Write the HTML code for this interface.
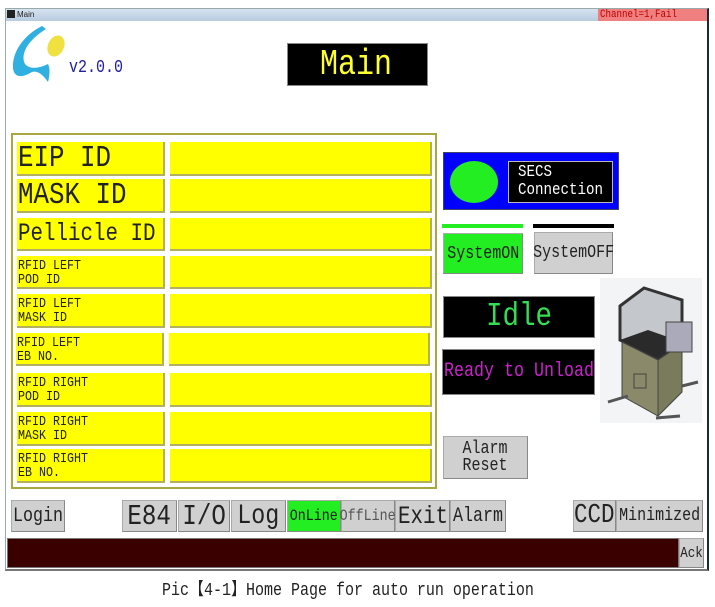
<!DOCTYPE html>
<html><head><meta charset="utf-8"><style>
*{margin:0;padding:0;box-sizing:border-box}
body{width:715px;height:607px;background:#fff;position:relative;overflow:hidden;font-family:"Liberation Mono",monospace}
.a{position:absolute}
.t{position:absolute;white-space:nowrap;transform-origin:0 0;line-height:1;transform:scaleX(.833)}
.btn{position:absolute;background:#d0d0d0;border:1px solid #aaa;border-right-color:#888;border-bottom-color:#888;color:#222;display:flex;align-items:center;justify-content:center;white-space:nowrap;overflow:visible}
.btn span{display:inline-block;transform:scaleX(.833)}
.yl{position:absolute;background:#ffff00;border-right:2px solid #b0b060;border-bottom:2px solid #b0b060}
.yl span{position:absolute;left:1px;white-space:nowrap;transform-origin:0 0;transform:scaleX(.833);color:#222;line-height:1}
</style></head><body>
<div class="a" style="left:5px;top:8px;width:704px;height:563px;border:1px solid #9aa;border-right:2px solid #1a2a3a;border-bottom:2px solid #777"></div>
<div class="a" style="left:6px;top:9px;width:701px;height:12px;background:linear-gradient(#d6e2f0,#b8cce0)"></div>
<div class="a" style="left:7px;top:10px;width:8px;height:8px;background:#222"></div>
<div class="a" style="left:17px;top:11px;font-size:8px;font-family:'Liberation Sans',sans-serif;color:#222;line-height:1">Main</div>
<div class="a" style="left:598px;top:9px;width:109px;height:12px;background:#f08080"></div>
<div class="t" style="left:600px;top:10px;font-size:11px;color:#b00">Channel=1,Fail</div>
<svg class="a" style="left:8px;top:24px" width="58" height="60" viewBox="0 0 58 60">
<path d="M34 2 C18 10 4 26 5 44 C6 54 14 54 24 48 C30 46 36 52 40 58 C42 50 42 44 40 40 C32 44 22 46 17 40 C12 30 20 16 38 5 Z" fill="#30b0e0"/>
<ellipse cx="48" cy="22" rx="8" ry="11" transform="rotate(25 48 22)" fill="#f0e040"/>
</svg>
<div class="t" style="left:69px;top:59px;font-size:18px;color:#2020a0">v2.0.0</div>
<div class="a" style="left:287px;top:43px;width:141px;height:43px;background:#000;border:1px solid #888"></div>
<div class="t" style="left:320px;top:47px;font-size:36px;color:#ffff30">Main</div>
<div class="a" style="left:11px;top:133px;width:426px;height:356px;border:2px solid #a8a840"></div>
<div class="yl" style="left:17px;top:142px;width:148px;height:34px"><span style="top:1px;font-size:31px">EIP ID</span></div>
<div class="yl" style="left:170px;top:142px;width:262px;height:34px"></div>
<div class="yl" style="left:17px;top:179px;width:148px;height:34px"><span style="top:1px;font-size:31px">MASK ID</span></div>
<div class="yl" style="left:170px;top:179px;width:262px;height:34px"></div>
<div class="yl" style="left:17px;top:218px;width:148px;height:33px"><span style="top:3px;font-size:25px">Pellicle ID</span></div>
<div class="yl" style="left:170px;top:218px;width:262px;height:33px"></div>
<div class="yl" style="left:17px;top:256px;width:148px;height:33px"><span style="top:3px;font-size:14px">RFID LEFT<br>POD ID</span></div>
<div class="yl" style="left:170px;top:256px;width:262px;height:33px"></div>
<div class="yl" style="left:17px;top:294px;width:148px;height:34px"><span style="top:3px;font-size:14px">RFID LEFT<br>MASK ID</span></div>
<div class="yl" style="left:170px;top:294px;width:262px;height:34px"></div>
<div class="yl" style="left:16px;top:333px;width:148px;height:33px"><span style="top:3px;font-size:14px">RFID LEFT<br>EB NO.</span></div>
<div class="yl" style="left:169px;top:333px;width:261px;height:33px"></div>
<div class="yl" style="left:17px;top:373px;width:148px;height:34px"><span style="top:3px;font-size:14px">RFID RIGHT<br>POD ID</span></div>
<div class="yl" style="left:170px;top:373px;width:262px;height:34px"></div>
<div class="yl" style="left:17px;top:412px;width:148px;height:34px"><span style="top:3px;font-size:14px">RFID RIGHT<br>MASK ID</span></div>
<div class="yl" style="left:170px;top:412px;width:262px;height:34px"></div>
<div class="yl" style="left:17px;top:449px;width:148px;height:34px"><span style="top:3px;font-size:14px">RFID RIGHT<br>EB NO.</span></div>
<div class="yl" style="left:170px;top:449px;width:262px;height:34px"></div>
<div class="a" style="left:443px;top:152px;width:176px;height:58px;background:#0000ff;border:1px solid #446"></div>
<div class="a" style="left:450px;top:161px;width:48px;height:42px;border-radius:50%;background:#22ee22"></div>
<div class="a" style="left:508px;top:161px;width:105px;height:42px;background:#000;border:1px solid #bbb"></div>
<div class="t" style="left:518px;top:164px;font-size:17px;color:#fff;line-height:18px">SECS<br>Connection</div>
<div class="a" style="left:442px;top:224px;width:81px;height:4px;background:#22ee22"></div>
<div class="a" style="left:533px;top:224px;width:81px;height:4px;background:#000"></div>
<div class="btn" style="left:443px;top:233px;width:80px;height:41px;background:#22ee22;font-size:18px"><span>SystemON</span></div>
<div class="btn" style="left:534px;top:232px;width:79px;height:42px;font-size:18px"><span>SystemOFF</span></div>
<div class="a" style="left:443px;top:296px;width:152px;height:42px;background:#000;border:1px solid #888"></div>
<div class="t" style="left:486px;top:300px;font-size:33px;color:#33dd55">Idle</div>
<div class="a" style="left:442px;top:349px;width:153px;height:46px;background:#000;border:1px solid #888"></div>
<div class="t" style="left:444px;top:362px;font-size:20px;color:#cc22cc">Ready to Unload</div>
<div class="btn" style="left:443px;top:436px;width:85px;height:43px;font-size:18px;line-height:17px;text-align:center"><span>Alarm<br>Reset</span></div>
<svg class="a" style="left:600px;top:278px" width="102" height="145" viewBox="0 0 102 145">
<rect width="102" height="145" fill="#f2f4f6"/>
<polygon points="20,28 44,10 82,22 82,64 58,80 20,62" fill="#c4c8cc" stroke="#333" stroke-width="3"/>
<polygon points="20,62 58,80 82,64 48,52" fill="#2a2a2a"/>
<polygon points="22,64 58,82 58,138 22,118" fill="#8a8a6a" stroke="#444"/>
<polygon points="58,82 82,66 82,114 58,138" fill="#7a7a5c" stroke="#444"/>
<rect x="66" y="44" width="26" height="30" fill="#aab" stroke="#444"/>
<rect x="34" y="96" width="12" height="14" fill="none" stroke="#444"/>
<path d="M8,124 L28,118 M56,140 L80,138 M82,108 L98,104" stroke="#555" stroke-width="3"/>
</svg>
<div class="btn" style="left:11px;top:500px;width:54px;height:32px;font-size:20px"><span>Login</span></div>
<div class="btn" style="left:122px;top:500px;width:55px;height:32px;font-size:29px"><span>E84</span></div>
<div class="btn" style="left:178px;top:500px;width:52px;height:32px;font-size:29px"><span>I/O</span></div>
<div class="btn" style="left:231px;top:500px;width:55px;height:32px;font-size:28px"><span>Log</span></div>
<div class="btn" style="left:287px;top:500px;width:54px;height:32px;font-size:16px;background:#22ee22"><span>OnLine</span></div>
<div class="btn" style="left:341px;top:500px;width:54px;height:32px;font-size:16px;color:#555"><span>OffLine</span></div>
<div class="btn" style="left:395px;top:500px;width:55px;height:32px;font-size:25px"><span>Exit</span></div>
<div class="btn" style="left:450px;top:500px;width:56px;height:32px;font-size:20px"><span>Alarm</span></div>
<div class="btn" style="left:573px;top:500px;width:43px;height:32px;font-size:27px"><span>CCD</span></div>
<div class="btn" style="left:616px;top:500px;width:87px;height:32px;font-size:18px"><span>Minimized</span></div>
<div class="a" style="left:7px;top:538px;width:672px;height:30px;background:#3a0000;border:1px solid #777"></div>
<div class="btn" style="left:679px;top:538px;width:25px;height:30px;font-size:15px;align-items:flex-end;padding-bottom:5px"><span>Ack</span></div>
<div class="t" style="left:162px;top:582px;font-size:18px;color:#222;font-family:'Liberation Mono','Noto Sans CJK SC',monospace">Pic【4-1】Home Page for auto run operation</div>
</body></html>
